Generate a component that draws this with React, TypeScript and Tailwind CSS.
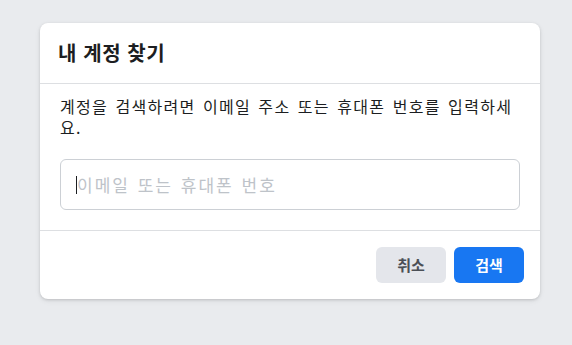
export default function App() {
  const font = { fontFamily: '"Noto Sans CJK KR", "Noto Sans", sans-serif' };
  return (
    <div
      className="min-h-[345px] w-full bg-[#e9ebee] pl-[40px] pt-[23px]"
      style={font}
    >
      <div className="w-[500px] rounded-lg bg-white shadow-[0_1px_3px_rgba(0,0,0,0.15),0_2px_6px_rgba(0,0,0,0.06)]">
        <div className="border-b border-[#dddfe2] px-[18px] py-[18px]">
          <h2 className="text-[20px] font-bold leading-6 tracking-[0.6px] text-[#1c1e21] [word-spacing:1px]">
            내 계정 찾기
          </h2>
        </div>
        <div className="px-5 pb-5 pt-3">
          <p className="text-[16px] leading-[21px] tracking-[1.3px] text-[#1c1e21] [word-spacing:2.5px]">
            계정을 검색하려면 이메일 주소 또는 휴대폰 번호를 입력하세요.
          </p>
          <div className="relative mt-[21px]">
            <input
              type="text"
              placeholder="이메일 또는 휴대폰 번호"
              className="h-[51px] w-full rounded-md border border-[#ccd0d5] px-4 text-[17px] tracking-[2px] text-[#1c1e21] outline-none [word-spacing:2px] placeholder:text-[#bec3c9]"
            />
            <span className="pointer-events-none absolute left-[16px] top-[17px] h-[18px] w-px bg-[#1c1e21]" />
          </div>
        </div>
        <div className="flex justify-end gap-2 border-t border-[#dddfe2] px-4 pb-4 pt-4">
          <button className="h-9 w-[70px] rounded-md bg-[#e4e6eb] text-[15px] font-bold text-[#4b4f56]">
            취소
          </button>
          <button className="h-9 w-[70px] rounded-md bg-[#1877f2] text-[15px] font-bold text-white">
            검색
          </button>
        </div>
      </div>
    </div>
  );
}
